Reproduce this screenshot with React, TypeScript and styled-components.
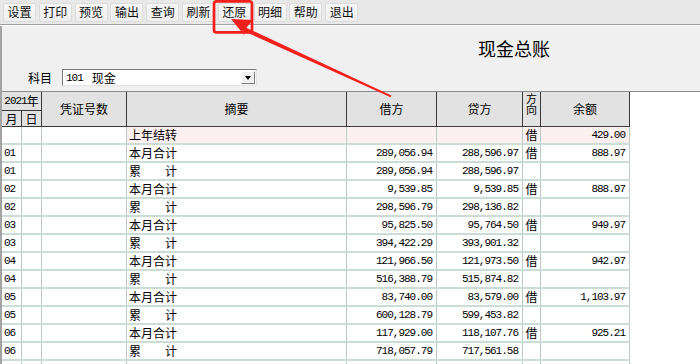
import styled, { createGlobalStyle } from "styled-components";

const GlobalStyle = createGlobalStyle`
  html, body { margin: 0; padding: 0; background: #fff; }
  body {
    font-family: "Noto Sans CJK SC", "Noto Sans", sans-serif;
    font-size: 12px;
    color: #000;
  }
`;

const tools = ["设置", "打印", "预览", "输出", "查询", "刷新", "还原", "明细", "帮助", "退出"];

type Entry = {
  month: string;
  summary: string;
  debit: string;
  credit: string;
  dir: string;
  balance: string;
  carry?: boolean;
};

const rows: Entry[] = [
  { month: "", summary: "上年结转", debit: "", credit: "", dir: "借", balance: "429.00", carry: true },
  { month: "01", summary: "本月合计", debit: "289,056.94", credit: "288,596.97", dir: "借", balance: "888.97" },
  { month: "01", summary: "累　　计", debit: "289,056.94", credit: "288,596.97", dir: "", balance: "" },
  { month: "02", summary: "本月合计", debit: "9,539.85", credit: "9,539.85", dir: "借", balance: "888.97" },
  { month: "02", summary: "累　　计", debit: "298,596.79", credit: "298,136.82", dir: "", balance: "" },
  { month: "03", summary: "本月合计", debit: "95,825.50", credit: "95,764.50", dir: "借", balance: "949.97" },
  { month: "03", summary: "累　　计", debit: "394,422.29", credit: "393,901.32", dir: "", balance: "" },
  { month: "04", summary: "本月合计", debit: "121,966.50", credit: "121,973.50", dir: "借", balance: "942.97" },
  { month: "04", summary: "累　　计", debit: "516,388.79", credit: "515,874.82", dir: "", balance: "" },
  { month: "05", summary: "本月合计", debit: "83,740.00", credit: "83,579.00", dir: "借", balance: "1,103.97" },
  { month: "05", summary: "累　　计", debit: "600,128.79", credit: "599,453.82", dir: "", balance: "" },
  { month: "06", summary: "本月合计", debit: "117,929.00", credit: "118,107.76", dir: "借", balance: "925.21" },
  { month: "06", summary: "累　　计", debit: "718,057.79", credit: "717,561.58", dir: "", balance: "" },
  { month: "", summary: "", debit: "", credit: "", dir: "", balance: "" },
];

const COLS = "20px 20px 85px 220px 90px 86px 18px 89px";

export default function App() {
  return (
    <Screen>
      <GlobalStyle />
      <Toolbar>
        {tools.map((t) => (
          <ToolButton key={t}>{t}</ToolButton>
        ))}
      </Toolbar>
      <Panel>
        <Title>现金总账</Title>
        <SubjectRow>
          <SubjectLabel>科目</SubjectLabel>
          <SubjectBox>
            <SubjectText>
              <Num>101</Num>
              <SubjectName>现金</SubjectName>
            </SubjectText>
            <DropButton>
              <DropArrow />
            </DropButton>
          </SubjectBox>
        </SubjectRow>
        <Sheet>
          <Head>
            <HeadCell $col="1 / 3" $row="1">
              <Num>2021</Num>年
            </HeadCell>
            <HeadCell $col="1" $row="2">月</HeadCell>
            <HeadCell $col="2" $row="2">日</HeadCell>
            <HeadCell $col="3" $row="1 / 3">凭证号数</HeadCell>
            <HeadCell $col="4" $row="1 / 3">摘要</HeadCell>
            <HeadCell $col="5" $row="1 / 3">借方</HeadCell>
            <HeadCell $col="6" $row="1 / 3">贷方</HeadCell>
            <HeadCell $col="7" $row="1 / 3" $top>
              <Vertical>方向</Vertical>
            </HeadCell>
            <HeadCell $col="8" $row="1 / 3">余额</HeadCell>
          </Head>
          {rows.map((r, i) => (
            <Row key={i}>
              <Cell>
                <Num>{r.month}</Num>
              </Cell>
              <Cell />
              <Cell />
              <Cell $pink={r.carry}>{r.summary}</Cell>
              <Cell $pink={r.carry} $right>
                <Num>{r.debit}</Num>
              </Cell>
              <Cell $pink={r.carry} $right>
                <Num>{r.credit}</Num>
              </Cell>
              <Cell $pink={r.carry} $center>
                {r.dir}
              </Cell>
              <Cell $pink={r.carry} $right>
                <Num>{r.balance}</Num>
              </Cell>
            </Row>
          ))}
        </Sheet>
      </Panel>
      <Marker width="700" height="364" viewBox="0 0 700 364">
        <rect x="214" y="1.4" width="38" height="31" rx="2.5" fill="none" stroke="#f2201c" strokeWidth="2.7" />
        <polygon
          fill="#f2201c"
          points="231,19 253,20 246.3,27.7 391.4,95.5 390.6,97.3 242.5,30.5 244.5,35.5"
        />
      </Marker>
    </Screen>
  );
}

const Screen = styled.div`
  position: relative;
  width: 700px;
  height: 364px;
  overflow: hidden;
  background: #f0f0f0;
`;

const Toolbar = styled.div`
  display: flex;
  align-items: center;
  gap: 2.8px;
  height: 24px;
  padding-left: 3px;
  background: #e8e8e8;
  border-bottom: 1px solid #a0a0a0;
  box-shadow: 0 1px 0 #fff;
`;

const ToolButton = styled.div`
  width: 33px;
  height: 19px;
  box-sizing: border-box;
  display: flex;
  align-items: center;
  justify-content: center;
  background: linear-gradient(#f7f7f7, #eeeeee);
  border: 1px solid #dcdcdc;
  border-radius: 2px;
  color: #111;
  font-size: 12px;
  line-height: 12px;
`;

const Panel = styled.div`
  border-left: 2px solid #a4a4a4;
  margin-top: 1px;
  height: 338px;
  display: flex;
  flex-direction: column;
`;

const Title = styled.div`
  padding: 12px 0 0 476px;
  font-size: 18px;
  line-height: 20px;
  height: 20px;
`;

const SubjectRow = styled.div`
  display: flex;
  align-items: center;
  gap: 10px;
  margin-top: 11px;
  padding-left: 26px;
  height: 17px;
`;

const SubjectLabel = styled.span`
  font-size: 12px;
  line-height: 12px;
`;

const SubjectBox = styled.div`
  width: 195px;
  height: 17px;
  box-sizing: border-box;
  display: flex;
  align-items: center;
  background: #fff;
  border: 1px solid;
  border-color: #7a7a7a #e4e4e4 #e4e4e4 #7a7a7a;
`;

const SubjectText = styled.div`
  flex: 1;
  padding-left: 3px;
  display: flex;
  align-items: center;
  line-height: 12px;
`;

const SubjectName = styled.span`
  margin-left: 9px;
`;

const DropButton = styled.div`
  width: 14px;
  height: 13px;
  margin-right: 1px;
  box-sizing: border-box;
  display: flex;
  align-items: center;
  justify-content: center;
  background: #f0f0f0;
  border: 1px solid;
  border-color: #fff #7a7a7a #7a7a7a #fff;
`;

const DropArrow = styled.div`
  width: 0;
  height: 0;
  border-left: 3.5px solid transparent;
  border-right: 3.5px solid transparent;
  border-top: 4px solid #000;
`;

const Num = styled.span`
  font-family: "Liberation Mono", monospace;
  font-size: 11px;
  letter-spacing: -1px;
`;

const Sheet = styled.div`
  flex: 1;
  margin-top: 5px;
  background: #fff;
  border-top: 1px solid #8a8a8a;
`;

const Head = styled.div`
  display: grid;
  grid-template-columns: ${COLS};
  grid-template-rows: 19px 16px;
  width: 628px;
`;

const HeadCell = styled.div<{ $col: string; $row: string; $top?: boolean }>`
  grid-column: ${({ $col }) => $col};
  grid-row: ${({ $row }) => $row};
  display: flex;
  align-items: ${({ $top }) => ($top ? "flex-start" : "center")};
  justify-content: center;
  text-align: center;
  background: #e2e2e2;
  border-right: 1px solid #3a3a3a;
  border-bottom: 1px solid #3a3a3a;
  font-size: 12px;
  line-height: 12px;
  white-space: nowrap;
`;

const Vertical = styled.span`
  writing-mode: vertical-rl;
  text-orientation: upright;
  font-size: 11px;
  line-height: 14px;
  letter-spacing: 0;
  margin-top: 1px;
`;

const Row = styled.div`
  display: grid;
  grid-template-columns: ${COLS};
  width: 628px;
  height: 18px;
  box-sizing: border-box;
  border-bottom: 2px solid #cbddd7;
`;

const Cell = styled.div<{ $pink?: boolean; $right?: boolean; $center?: boolean }>`
  display: flex;
  align-items: center;
  justify-content: ${({ $right, $center }) => ($right ? "flex-end" : $center ? "center" : "flex-start")};
  padding: 0 ${({ $right }) => ($right ? "4px" : "0")} 0 ${({ $right, $center }) => ($right || $center ? "0" : "2px")};
  background: ${({ $pink }) => ($pink ? "#fdf0f0" : "#fff")};
  border-right: 1px solid #b9cbc6;
  font-size: 12px;
  line-height: 12px;
  white-space: pre;
  overflow: hidden;
`;

const Marker = styled.svg`
  position: absolute;
  left: 0;
  top: 0;
  pointer-events: none;
`;
